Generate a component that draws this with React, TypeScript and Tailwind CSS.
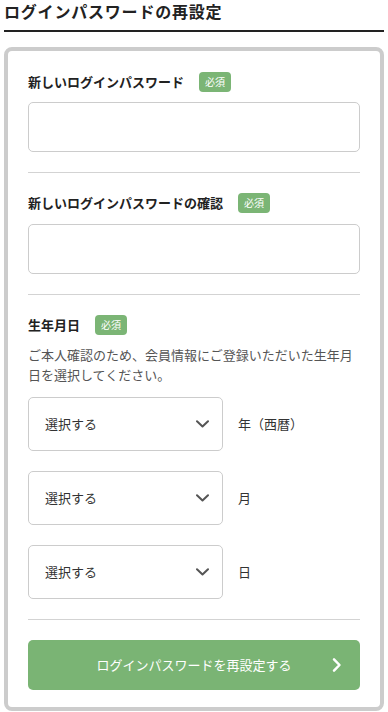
import React from "react";

const font = { fontFamily: '"Noto Sans CJK JP", "Noto Sans", sans-serif' };

function Badge() {
  return (
    <span className="ml-[15px] inline-flex h-5 w-8 items-center justify-center rounded-[4px] bg-[#7bb575] text-[10px] leading-none text-white">
      必須
    </span>
  );
}

function Label({ text }: { text: string }) {
  return (
    <div className="flex h-5 items-center">
      <span className="text-[13px] font-bold leading-5 text-[#222]">{text}</span>
      <Badge />
    </div>
  );
}

function Chevron() {
  return (
    <svg width="13" height="8" viewBox="0 0 13 8" fill="none">
      <path d="M1 1.2 L6.5 6.5 L12 1.2" stroke="#555" strokeWidth="2" strokeLinecap="round" strokeLinejoin="round" />
    </svg>
  );
}

function SelectRow({ unit }: { unit: string }) {
  return (
    <div className="flex items-center">
      <div className="flex h-[54px] w-[195px] items-center justify-between rounded-[5px] border border-[#ccc] bg-white pl-4 pr-[13px]">
        <span className="text-[13px] text-[#333]">選択する</span>
        <Chevron />
      </div>
      <span className="ml-[15px] text-[13px] text-[#333]">{unit}</span>
    </div>
  );
}

export default function App() {
  return (
    <div className="w-[388px] bg-white" style={font}>
      <div className="mx-1 border-b-2 border-[#222] pb-2">
        <h1 className="text-[16px] font-bold leading-[22px] tracking-wider text-[#222]">ログインパスワードの再設定</h1>
      </div>
      <div className="mx-1 mt-[15px] rounded-lg border-4 border-[#ccc] bg-white px-5 pb-[17px] pt-[21px]">
        <Label text="新しいログインパスワード" />
        <div className="mt-2.5 h-[50px] rounded-[5px] border border-[#ccc]" />
        <div className="mt-5 h-px bg-[#d3d3d3]" />

        <div className="pt-5">
          <Label text="新しいログインパスワードの確認" />
          <div className="mt-[11px] h-[50px] rounded-[5px] border border-[#ccc]" />
        </div>
        <div className="mt-5 h-px bg-[#d3d3d3]" />

        <div className="pt-5">
          <Label text="生年月日" />
          <p className="mt-2.5 text-[13px] leading-5 text-[#555]">
            ご本人確認のため、会員情報にご登録いただいた生年月日を選択してください。
          </p>
          <div className="mt-3 flex flex-col gap-5">
            <SelectRow unit="年（西暦）" />
            <SelectRow unit="月" />
            <SelectRow unit="日" />
          </div>
        </div>
        <div className="mt-5 h-px bg-[#d3d3d3]" />

        <button className="relative mt-5 flex h-[50px] w-full items-center justify-center rounded-[5px] bg-[#7ab474] text-[13px] text-white">
          <span>ログインパスワードを再設定する</span>
          <svg className="absolute right-[18px] top-1/2 -translate-y-1/2" width="10" height="15" viewBox="0 0 10 15" fill="none">
            <path d="M2 1.8 L7.5 7.5 L2 13.2" stroke="#fff" strokeWidth="2.5" strokeLinecap="round" strokeLinejoin="round" />
          </svg>
        </button>
      </div>
    </div>
  );
}
